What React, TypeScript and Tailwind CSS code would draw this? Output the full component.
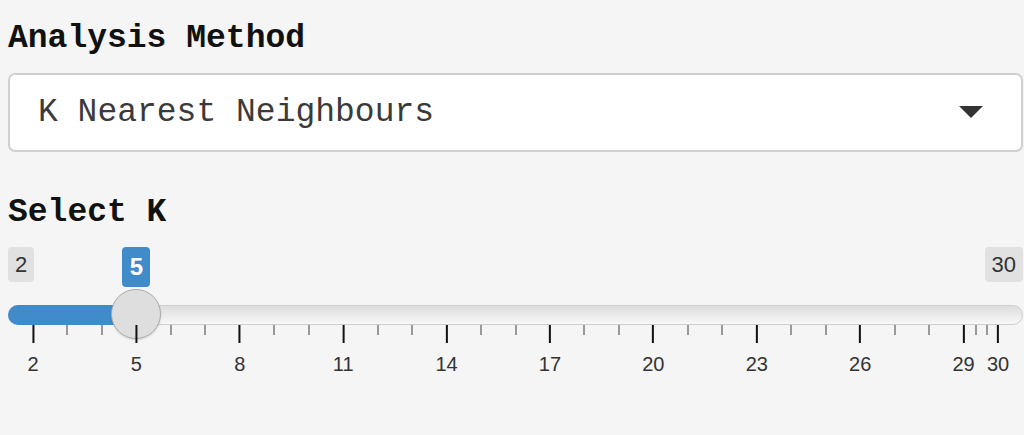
import React from "react";

const MIN = 2;
const MAX = 30;
const VALUE = 5;

// slider geometry: the handle is 50px wide, so values live inside a 25px inset of the track
const TRACK_W = 1015;
const PAD = 25;
const pct = (v: number): number => PAD + ((v - MIN) / (MAX - MIN)) * (TRACK_W - PAD * 2);

const majors = [2, 5, 8, 11, 14, 17, 20, 23, 26, 29, 30];
const minors = [3, 4, 6, 7, 9, 10, 12, 13, 15, 16, 18, 19, 21, 22, 24, 25, 27, 28, 29.36, 29.68];

const sans = "[font-family:'Liberation_Sans',Arial,sans-serif]";

const Slider = (): JSX.Element => {
  const x = pct(VALUE);
  return (
    <div className={`flex flex-col ${sans}`}>
      <div className="relative flex h-[41px] items-start justify-between">
        <span className="flex h-[35px] items-center rounded-[4px] bg-[#e1e1e1] px-[7px] text-[22px] text-[#333]">
          {MIN}
        </span>
        <span
          className="absolute top-0 flex h-[40px] w-[28px] -translate-x-1/2 items-center justify-center rounded-[4px] bg-[#428bca] text-[24px] font-bold text-white"
          style={{ left: x }}
        >
          {VALUE}
        </span>
        <span className="flex h-[35px] items-center rounded-[4px] bg-[#e1e1e1] px-[7px] text-[22px] text-[#333]">
          {MAX}
        </span>
      </div>

      <div className="relative mt-[17px] h-[20px] rounded-full border border-[#cfcfcf] bg-gradient-to-b from-[#dddddd] to-[#f8f8f8]">
        <div className="-m-px h-[20px] rounded-l-full bg-[#428bca]" style={{ width: x }} />
        <div
          className="absolute top-[-17px] h-[50px] w-[50px] -translate-x-1/2 rounded-full border border-[#ababab] bg-[#dedede] shadow-[0_1px_2px_rgba(0,0,0,0.15)]"
          style={{ left: x - 1 }}
        />
      </div>

      {/* grid: ticks and their numbers */}
      <div className="relative h-[55px]">
        {minors.map((v) => (
          <i key={`m${v}`} className="absolute top-0 h-[10px] w-[2px] -translate-x-1/2 bg-[#999]" style={{ left: pct(v) }} />
        ))}
        {majors.map((v) => (
          <div key={v} className="absolute top-0 flex -translate-x-1/2 flex-col items-center" style={{ left: pct(v) }}>
            <i className="h-[18px] w-[2px] bg-[#111]" />
            <span className="mt-[9px] text-[20px] leading-[24px] text-[#333]">{v}</span>
          </div>
        ))}
      </div>
    </div>
  );
};

export default function App(): JSX.Element {
  return (
    <div className="flex min-h-[435px] w-full flex-col bg-[#f5f5f5] pl-2 pr-[1px] pt-[20px] [font-family:'Liberation_Mono','Courier_New',monospace]">
      <label className="text-[33px] font-bold leading-[38px] text-[#111]">Analysis Method</label>
      <div className="mt-[15px] flex h-[79px] items-center justify-between rounded-[7px] border-2 border-[#d0d0d0] bg-white pl-[28px] pr-[38px]">
        <span className="text-[33px] leading-[38px] text-[#3a3a3a]">K Nearest Neighbours</span>
        <svg width="24" height="12" viewBox="0 0 24 12" className="-mt-[2px]">
          <polygon points="0,0 24,0 12,12" fill="#333" />
        </svg>
      </div>
      <label className="mt-[42px] text-[33px] font-bold leading-[38px] text-[#111]">Select K</label>
      <div className="mt-[15px]">
        <Slider />
      </div>
    </div>
  );
}
